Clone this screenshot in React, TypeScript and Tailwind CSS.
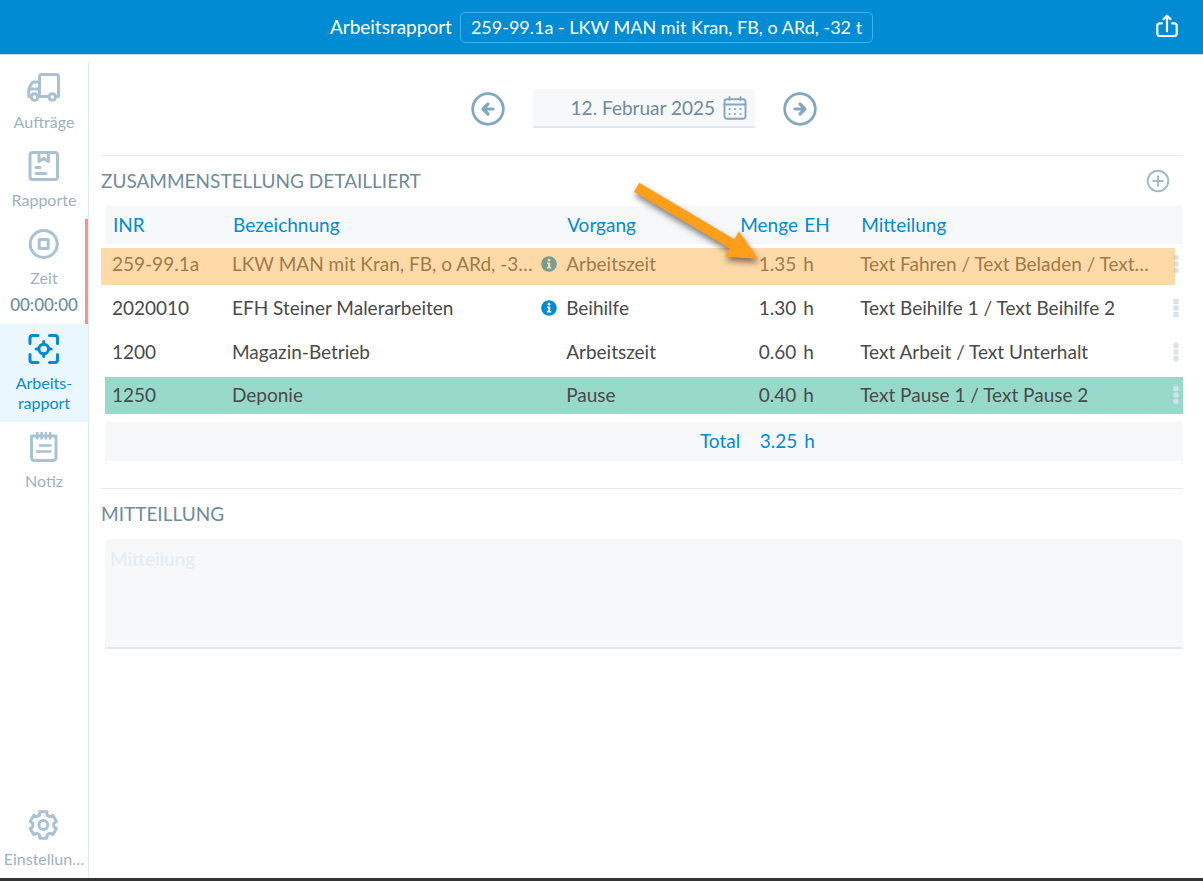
import type { ReactNode } from "react";

type Entry = {
  inr: string;
  name: string;
  info?: boolean;
  task: string;
  amount: string;
  note: string;
  mark?: "orange" | "green";
};

const entries: Entry[] = [
  { inr: "259-99.1a", name: "LKW MAN mit Kran, FB, o ARd, -3…", info: true, task: "Arbeitszeit", amount: "1.35", note: "Text Fahren / Text Beladen / Text…", mark: "orange" },
  { inr: "2020010", name: "EFH Steiner Malerarbeiten", info: true, task: "Beihilfe", amount: "1.30", note: "Text Beihilfe 1 / Text Beihilfe 2" },
  { inr: "1200", name: "Magazin-Betrieb", task: "Arbeitszeit", amount: "0.60", note: "Text Arbeit / Text Unterhalt" },
  { inr: "1250", name: "Deponie", task: "Pause", amount: "0.40", note: "Text Pause 1 / Text Pause 2", mark: "green" },
];

function gearPath(cx: number, cy: number) {
  const points: string[] = [];
  for (let tooth = 0; tooth < 6; tooth++) {
    const mid = -90 + tooth * 60;
    for (const [offset, radius] of [[-21, 10.6], [-15, 13.6], [15, 13.6], [21, 10.6]]) {
      const a = ((mid + offset) * Math.PI) / 180;
      points.push(`${(cx + radius * Math.cos(a)).toFixed(2)} ${(cy + radius * Math.sin(a)).toFixed(2)}`);
    }
  }
  return `M${points.join("L")}Z`;
}

function NavIcon({ children }: { children: ReactNode }) {
  return (
    <svg aria-hidden="true" viewBox="0 0 36 32" className="h-8 w-9 shrink-0" fill="none" stroke="currentColor" strokeWidth="3" strokeLinecap="round" strokeLinejoin="round">
      {children}
    </svg>
  );
}

function NavItem({ icon, label, active, children }: { icon: ReactNode; label: ReactNode; active?: boolean; children?: ReactNode }) {
  return (
    <a
      href="#"
      aria-current={active ? "page" : undefined}
      className={
        active
          ? "flex flex-col items-center bg-[#ebf7fe] py-[9px] text-[#018bd3]"
          : "flex flex-col items-center py-[9px] text-[#a9c1d2]"
      }
    >
      <NavIcon>{icon}</NavIcon>
      <span className={active ? "mt-2 text-center text-base leading-5" : "mt-2 text-base leading-5 text-[#9db2bf]"}>{label}</span>
      {children}
    </a>
  );
}

function ArrowCircle({ direction }: { direction: "left" | "right" }) {
  return (
    <svg aria-hidden="true" viewBox="0 0 34 34" className="size-[34px]" fill="none" stroke="#84a7c0" strokeLinecap="round" strokeLinejoin="round">
      <circle cx="17" cy="17" r="15.3" strokeWidth="2.8" />
      <path strokeWidth="3.2" d={direction === "left" ? "M22 17H12M17 12l-5 5 5 5" : "M12 17h10M17 12l5 5-5 5"} />
    </svg>
  );
}

function Dots() {
  return (
    <svg aria-hidden="true" viewBox="0 0 6 20" className="h-5 w-[6px]" fill="#d3e2ec">
      <circle cx="3" cy="3.5" r="2.7" />
      <circle cx="3" cy="10" r="2.7" />
      <circle cx="3" cy="16.5" r="2.7" />
    </svg>
  );
}

function InfoIcon() {
  return (
    <svg aria-hidden="true" viewBox="0 0 16 16" className="size-4 shrink-0">
      <circle cx="8" cy="8" r="7.8" fill="#018bd3" />
      <circle cx="8" cy="4.2" r="1.4" fill="#fff" />
      <path d="M6 6.6h3.2v4.4h1v1.4H6V11h1V8H6z" fill="#fff" />
    </svg>
  );
}

function Pointer() {
  return (
    <svg
      aria-hidden="true"
      viewBox="625 175 145 100"
      className="pointer-events-none absolute -top-[69px] right-[27px] z-20 h-[100px] w-[145px] max-w-none drop-shadow-[1px_4px_3px_rgba(0,0,0,0.5)]"
    >
      <path fill="#ff9e19" d="M639.3 182.7 734.3 239.3 739 231.3 758 258.7 725 256.7 729.3 248.3 634 191.7Z" />
    </svg>
  );
}

export default function App() {
  return (
    <div className="flex min-h-screen flex-col border-b-[3px] border-[#333] bg-white font-['Lato','Liberation_Sans',sans-serif] text-[19px] leading-6 text-[#484a4b]">
      <header className="relative flex h-[55px] shrink-0 items-center justify-center gap-2 border-b border-[#cfd8de] bg-[#018bd3] text-white">
        <h1>Arbeitsrapport</h1>
        <button type="button" className="h-[31px] rounded-[5px] border border-[#3fb0f0] px-2.5 text-lg leading-6">
          259-99.1a - LKW MAN mit Kran, FB, o ARd, -32 t
        </button>
        <button type="button" aria-label="Teilen" className="absolute top-[14px] right-6">
          <svg aria-hidden="true" viewBox="0 0 24 24" className="size-6" fill="none" stroke="#fff" strokeWidth="2.2" strokeLinecap="round" strokeLinejoin="round">
            <path d="M7 9.3H4.8A2.5 2.5 0 0 0 2.3 11.8v7.7A2.5 2.5 0 0 0 4.8 22h14.400a2.500 2.500 0 0 0 2.500-2.500v-7.700a2.500 2.500 0 0 0-2.500-2.500H17" />
            <path d="M12 17.300V2M8.500 5.200 12 1.700l3.500 3.500" />
          </svg>
        </button>
      </header>

      <div className="flex grow">
        <nav className="mt-[7px] flex w-[89px] shrink-0 flex-col border-r border-[#e2ecf3] pt-px">
          <NavItem
            label="Aufträge"
            icon={
              <>
                <path d="M13.500 22V5A2.500 2.500 0 0 1 16 2.500h14A2.500 2.500 0 0 1 32.500 5v19.500H30M12 24.500h10.500M5 24.500H2.800v-7.300l2.400-5A3.500 3.500 0 0 1 8.500 10h5M3 17h10.500" />
                <circle cx="8.500" cy="25" r="3.300" fill="#fff" />
                <circle cx="26.300" cy="25" r="3.300" fill="#fff" />
              </>
            }
          />
          <NavItem
            label="Rapporte"
            icon={
              <>
                <rect x="4" y="2.500" width="27.500" height="27" rx="2.500" />
                <path d="M13 3v8.500l4.700-3 4.700 3V3M10 17.500h4M10 23.500h10" />
              </>
            }
          />
          <div className="border-r-[3px] border-[#fd8d90] pl-[3px]">
            <NavItem
              label="Zeit"
              icon={
                <>
                  <circle cx="17.700" cy="16" r="13.500" />
                  <rect x="13.200" y="11.500" width="9" height="9" rx="0.500" />
                </>
              }
            >
              <span className="mt-[7px] text-[17px] leading-5 font-medium text-[#6d8c9f]">00:00:00</span>
            </NavItem>
          </div>
          <NavItem
            active
            label={
              <>
                Arbeits-
                <br />
                rapport
              </>
            }
            icon={
              <>
                <path d="M4 10.500V5A2.500 2.500 0 0 1 6.500 2.500H12M23.500 2.500H29A2.500 2.500 0 0 1 31.500 5v5.500M31.500 21.500V27a2.500 2.500 0 0 1-2.500 2.500h-5.500M12 29.500H6.500A2.500 2.500 0 0 1 4 27v-5.500" />
                <circle cx="17.700" cy="16" r="4.800" />
                <path d="M17.700 8.500v2.500M17.700 21v2.500M10.200 16h2.500M22.700 16h2.500" />
              </>
            }
          />
          <NavItem
            label="Notiz"
            icon={
              <>
                <path d="M5.500 5h24.500v21.500a3 3 0 0 1-3 3H8.500a3 3 0 0 1-3-3Z" />
                <path strokeWidth="2.600" d="M11.300 2v5.500M15.600 2v5.500M19.900 2v5.500M24.200 2v5.500M14 14.500h10.500M11 20.500h13.500" />
              </>
            }
          />
          <div className="mt-auto">
            <NavItem
              label="Einstellun…"
              icon={
                <>
                  <path d={gearPath(17.3, 16)} />
                  <circle cx="17.300" cy="16" r="4.500" />
                </>
              }
            />
          </div>
        </nav>

        <main className="min-w-0 grow pt-[34px] pr-5 pl-3">
          <div className="flex items-center justify-center gap-7 pl-1">
            <button type="button" aria-label="Vorheriger Tag">
              <ArrowCircle direction="left" />
            </button>
            <button type="button" className="flex h-[39px] w-[222px] items-center justify-end gap-2 rounded-t-[3px] border-b-2 border-[#dce9f2] bg-[#f6f8fa] pr-2 text-[#6f8b9c]">
              12. Februar 2025
              <svg aria-hidden="true" viewBox="0 0 24 24" className="size-6" fill="none" stroke="#84a7c0" strokeWidth="1.900" strokeLinecap="round">
                <rect x="1.500" y="3.200" width="21" height="19.600" rx="2.500" />
                <path d="M1.500 8.500h21M6.500 1v3M17.500 1v3" />
                <path strokeWidth="2.200" d="M6.500 13h.01M12 13h.01M17.500 13h.01M6.500 18h.01M12 18h.01M17.500 18h.01" />
              </svg>
            </button>
            <button type="button" aria-label="Nächster Tag">
              <ArrowCircle direction="right" />
            </button>
          </div>

          <section className="mt-[27px] border-t border-[#e2ecf3]">
            <div className="flex h-[50px] items-center justify-between pr-[13px] text-[#6f8b9c]">
              <h2>ZUSAMMENSTELLUNG DETAILLIERT</h2>
              <button type="button" aria-label="Eintrag hinzufügen">
                <svg aria-hidden="true" viewBox="0 0 24 24" className="size-6" fill="none" stroke="#9dbacd" strokeWidth="1.900" strokeLinecap="round">
                  <circle cx="12" cy="12" r="10.300" />
                  <path d="M12 7.200v9.600M7.200 12h9.600" />
                </svg>
              </button>
            </div>
            <div className="pl-1">
              <table className="w-full table-fixed border-collapse">
                <colgroup>
                  <col className="w-[120px]" />
                  <col className="w-[31%]" />
                  <col className="w-[181px]" />
                  <col className="w-[57px]" />
                  <col className="w-[56px]" />
                  <col />
                </colgroup>
                <thead className="bg-[#f6f8fa] text-left text-[#018bd3]">
                  <tr className="h-[38px]">
                    <th className="pl-2 font-normal">INR</th>
                    <th className="pl-2 font-normal">Bezeichnung</th>
                    <th className="pl-2 font-normal">Vorgang</th>
                    <th className="text-right font-normal">Menge</th>
                    <th className="pl-[7px] font-normal">EH</th>
                    <th className="pl-2 font-normal">Mitteilung</th>
                  </tr>
                </thead>
                <tbody>
                  {entries.map((entry) => (
                    <tr key={entry.inr} className="relative h-11">
                      <td className="pb-1 pl-[7px]">
                        {entry.mark === "green" && <span className="absolute inset-x-0 top-px h-[37px] bg-[#98dac9]" />}
                        <span className="relative">{entry.inr}</span>
                      </td>
                      <td className="pb-1 pl-[7px]">
                        <div className="relative flex items-center justify-between pr-[2px]">
                          <span className="whitespace-nowrap">{entry.name}</span>
                          {entry.info ? <InfoIcon /> : null}
                        </div>
                      </td>
                      <td className="pb-1 pl-[7px]">
                        <span className="relative">{entry.task}</span>
                      </td>
                      <td className="relative pr-px pb-1 text-right">
                        {entry.amount}
                        {entry.mark === "orange" && <Pointer />}
                      </td>
                      <td className="pb-1 pl-[6px]">
                        <span className="relative">h</span>
                      </td>
                      <td className="pb-1 pl-[7px]">
                        <div className="relative flex items-center justify-between pr-1">
                          <span className="whitespace-nowrap">{entry.note}</span>
                          <button type="button" aria-label="Mehr">
                            <Dots />
                          </button>
                        </div>
                        {entry.mark === "orange" && <span className="absolute top-1 right-2 -left-1 z-10 h-[37px] bg-[#ffb048]/47" />}
                      </td>
                    </tr>
                  ))}
                </tbody>
                <tfoot className="text-[#018bd3]">
                  <tr className="h-[41px]">
                    <th colSpan={3} className="border-t-[3px] border-white bg-[#f6f8fa] bg-clip-padding text-right font-normal">
                      Total
                    </th>
                    <td className="border-t-[3px] border-white bg-[#f6f8fa] bg-clip-padding text-right">3.25</td>
                    <td className="border-t-[3px] border-white bg-[#f6f8fa] bg-clip-padding pl-[7px]">h</td>
                    <td className="border-t-[3px] border-white bg-[#f6f8fa] bg-clip-padding" />
                  </tr>
                </tfoot>
              </table>
            </div>
          </section>

          <section className="mt-[27px] border-t border-[#e2ecf3]">
            <h2 className="flex h-[50px] items-center text-[#6f8b9c]">
              <label htmlFor="mitteilung">MITTEILLUNG</label>
            </h2>
            <div className="pl-1">
              <textarea
                id="mitteilung"
                placeholder="Mitteilung"
                className="block h-[110px] w-full resize-none rounded-t-[3px] border-b-2 border-[#dfe9f1] bg-[#f6f8fa] px-[5px] py-2 placeholder:text-[#e2edf5]"
              />
            </div>
          </section>
        </main>
      </div>
    </div>
  );
}
